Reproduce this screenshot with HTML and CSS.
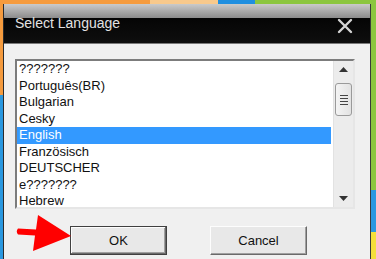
FILE: index.html
```html
<!DOCTYPE html>
<html lang="en">
<head>
    <meta charset="UTF-8">
    <title>Select Language</title>
    <link rel="stylesheet" href="styles.css">
</head>
<body>
    <div class="desktop">
        <div class="window">
            <div class="titlebar">
                <span class="title">Select Language</span>
                <svg class="close" width="16" height="16" viewBox="0 0 16 16">
                    <path d="M2 2 L14 14 M14 2 L2 14" stroke="#d4d4d4" stroke-width="2.4" stroke-linecap="round"/>
                </svg>
            </div>

            <div class="content">
                <div class="listbox">
                    <ul class="items">
                        <li>???????</li>
                        <li>Português(BR)</li>
                        <li>Bulgarian</li>
                        <li>Cesky</li>
                        <li class="selected">English</li>
                        <li>Französisch</li>
                        <li>DEUTSCHER</li>
                        <li>e???????</li>
                        <li>Hebrew</li>
                    </ul>
                    <div class="scrollbar">
                        <div class="arrow-btn">
                            <svg width="9" height="5" viewBox="0 0 9 5"><path d="M0 5 L4.5 0 L9 5 Z" fill="#333"/></svg>
                        </div>
                        <div class="thumb">
                            <span></span><span></span><span></span><span></span>
                        </div>
                        <div class="track"></div>
                        <div class="arrow-btn">
                            <svg width="9" height="5" viewBox="0 0 9 5"><path d="M0 0 L4.5 5 L9 0 Z" fill="#333"/></svg>
                        </div>
                    </div>
                </div>

                <div class="buttons">
                    <button class="btn btn-default">OK</button>
                    <button class="btn">Cancel</button>
                </div>
            </div>
        </div>

        <!-- red pointer drawn over the dialog -->
        <svg class="pointer" width="58" height="40" viewBox="0 0 58 40">
            <path d="M3 14.5 Q0.5 17.5 3 20.5 L20 21.5 L18 37 L56 22 L23 1 L21 15.5 Z" fill="#ff0000"/>
        </svg>
    </div>
</body>
</html>
```

FILE: styles.css
```css
* {
    margin: 0;
    padding: 0;
    box-sizing: border-box;
}

body {
    width: 376px;
    height: 259px;
    overflow: hidden;
    font-family: 'Liberation Sans', Arial, sans-serif;
}

.desktop {
    position: relative;
    height: 259px;
    padding: 4px 5px 0 3px;
    background:
        linear-gradient(to right, #f59b3e 0, #f59b3e 150px, #f8c98c 150px, #f8c98c 218px, #1f8fe0 218px, #1f8fe0 255px, #8cc63f 255px) top left / 100% 4px no-repeat,
        linear-gradient(to bottom, #f59b3e 0, #f59b3e 95px, #2a98e0 95px) top left / 3px 100% no-repeat,
        linear-gradient(to bottom, #8cc63f 0, #8cc63f 190px, #2a98e0 190px, #2a98e0 232px, #f4df3a 232px) top right / 5px 100% no-repeat,
        #f0f0f0;
}

.window {
    height: 100%;
    display: flex;
    flex-direction: column;
    background: #f0f0f0;
    border-left: 1px solid #2b2b2b;
    border-right: 1px solid #3a3a3a;
}

.titlebar {
    height: 40px;
    display: flex;
    align-items: flex-start;
    justify-content: space-between;
    padding: 11px 17px 0 11px;
    background: linear-gradient(to bottom, #cacaca 0, #8c8c8c 14px, #050505 14px, #0e0e0e 39px, #7a7a7a 39px);
}

.title {
    color: #e2e2e2;
    font-size: 14px;
    line-height: 16px;
}

.close {
    margin-top: 3px;
}

.content {
    flex: 1;
    padding: 15px 0 0 11px;
}

.listbox {
    width: 340px;
    height: 150px;
    display: flex;
    background: #fff;
    border-top: 2px solid #7c7c7c;
    border-left: 2px solid #7c7c7c;
    border-right: 2px solid #e6e6e6;
    border-bottom: 2px solid #e6e6e6;
    overflow: hidden;
}

.items {
    flex: 1;
    list-style: none;
    overflow: hidden;
}

.items li {
    height: 16.5px;
    line-height: 16.5px;
    padding-left: 2px;
    margin-right: 2px;
    font-size: 13px;
    color: #111;
    white-space: nowrap;
}

.items li.selected {
    background: #3399ff;
    color: #fff;
}

.scrollbar {
    width: 20px;
    display: flex;
    flex-direction: column;
    background: #ececec;
    border-left: 1px solid #e2e2e2;
}

.arrow-btn {
    height: 17px;
    display: flex;
    align-items: center;
    justify-content: center;
}

.thumb {
    height: 33px;
    margin: 5px 1px 0 1px;
    border: 1px solid #9a9a9a;
    border-radius: 3px;
    background: linear-gradient(to right, #f4f4f4, #e2e2e2);
    display: flex;
    flex-direction: column;
    align-items: center;
    justify-content: center;
    gap: 2px;
}

.thumb span {
    width: 8px;
    height: 1px;
    background: #444;
}

.track {
    flex: 1;
}

.buttons {
    display: flex;
    gap: 43px;
    margin-top: 17px;
    padding-left: 55px;
}

.btn {
    width: 97px;
    height: 29px;
    font-family: 'Liberation Sans', Arial, sans-serif;
    font-size: 13px;
    color: #111;
    background: #e8e8e8;
    border: 1px solid;
    border-color: #fdfdfd #6a6a6a #6a6a6a #fdfdfd;
    box-shadow: inset -1px -1px 0 #a0a0a0, inset 1px 1px 0 #e8e8e8;
}

.btn-default {
    border: 1px solid #404040;
    box-shadow: inset -1px -1px 0 #6a6a6a, inset 1px 1px 0 #fdfdfd, inset -2px -2px 0 #a0a0a0;
}

.pointer {
    position: absolute;
    left: 15px;
    top: 214px;
}
```
